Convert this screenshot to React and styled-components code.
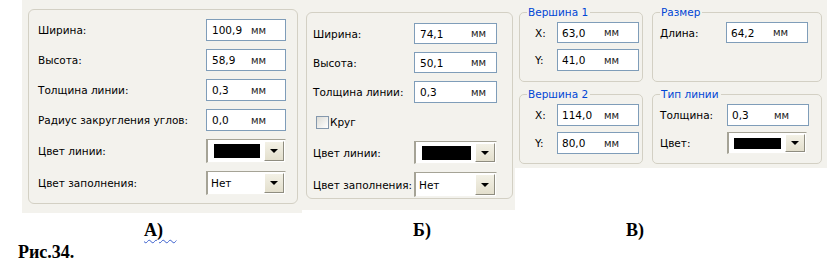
import React from 'react';
import styled, { createGlobalStyle } from 'styled-components';

const Global = createGlobalStyle`
  html, body { margin: 0; padding: 0; background: #ffffff; }
  body { font-family: "DejaVu Sans", Verdana, sans-serif; }
`;

const Page = styled.div`
  width: 831px;
  height: 266px;
  overflow: hidden;
  background: #fff;
`;

const Figures = styled.div`
  display: flex;
  align-items: flex-start;
`;

const Sheet = styled.div`
  box-sizing: border-box;
  width: ${p => p.$w}px;
  height: ${p => p.$h}px;
  margin-left: ${p => p.$ml || 0}px;
  padding: ${p => p.$pad};
  background: #f3f2ed;
`;

const Frame = styled.div`
  box-sizing: border-box;
  height: 100%;
  border: 1px solid #d3d0c4;
  border-radius: 6px;
  padding: ${p => p.$pad};
  display: grid;
  grid-template-columns: ${p => p.$cols};
  row-gap: 8px;
  align-content: start;
  align-items: center;
`;

const Label = styled.span`
  font-size: 10.5px;
  color: #000;
  white-space: nowrap;
`;

const Field = styled.div`
  box-sizing: border-box;
  width: ${p => p.$w}px;
  height: ${p => p.$h || 22}px;
  border: 1px solid #7f9db9;
  background: #fff;
  display: flex;
  align-items: center;
  padding-left: ${p => p.$pl || 5}px;
  font-size: 10.5px;
  color: #000;
`;

const Value = styled.span`
  width: ${p => p.$vw}px;
  flex: none;
`;

const Unit = styled.span`
  color: #222;
  font-size: 10px;
`;

const Combo = styled.div`
  box-sizing: border-box;
  width: ${p => p.$w}px;
  height: ${p => p.$h || 23}px;
  display: flex;
  align-items: stretch;
  border-style: solid;
  border-width: 1px 1px 1px 2px;
  border-color: #a5a396 #f4f3ee #f4f3ee #a5a396;
  background: #fff;
  padding: 1px 1px 1px 0;
`;

const ComboBody = styled.div`
  flex: 1;
  display: flex;
  align-items: center;
  padding: 0 4px 0 ${p => p.$pl || 4}px;
  font-size: 10.5px;
  color: #000;
`;

const Swatch = styled.div`
  flex: 1;
  height: ${p => p.$sh || 13}px;
  background: #000;
`;

const DropButton = styled.div`
  box-sizing: border-box;
  width: 20px;
  flex: none;
  display: flex;
  align-items: center;
  justify-content: center;
  background: linear-gradient(#f3f1e6, #e3dfcd);
  border-style: solid;
  border-width: 1px;
  border-color: #ffffff #8f8d80 #8f8d80 #ffffff;
`;

const Arrow = styled.span`
  width: 0;
  height: 0;
  border-left: 4px solid transparent;
  border-right: 4px solid transparent;
  border-top: 4px solid #000;
`;

const CheckRow = styled.label`
  grid-column: 1 / -1;
  display: flex;
  align-items: center;
  gap: 1px;
  height: 22px;
  padding-left: 3px;
  font-size: 10.5px;
  color: #000;
`;

const CheckBox = styled.span`
  box-sizing: border-box;
  width: 13px;
  height: 13px;
  border: 1px solid #8498ad;
  background: linear-gradient(135deg, #dcdcd6, #ffffff);
`;

const GroupGrid = styled.div`
  display: grid;
  grid-template-columns: 124px 170px;
  column-gap: 9px;
  row-gap: 5px;
`;

const Group = styled.fieldset`
  box-sizing: border-box;
  margin: 0;
  height: 77px;
  border: 1px solid #d3d0c4;
  border-radius: 5px;
  padding: 3px 3px 0 7px;
  min-width: 0;
`;

const Legend = styled.legend`
  padding: 0 2px 0 1px;
  font-size: 10.5px;
  line-height: 14px;
  color: #0046d5;
`;

const GroupBody = styled.div`
  display: grid;
  grid-template-columns: ${p => p.$cols};
  padding-left: ${p => p.$pl || 0}px;
  row-gap: 6px;
  align-items: center;
`;

const Captions = styled.div`
  display: grid;
  grid-template-columns: 269px 213px auto;
  padding: 7px 0 0 144px;
`;

const Caption = styled.span`
  font-family: "Liberation Serif", "Times New Roman", serif;
  font-weight: bold;
  font-size: 18px;
  line-height: 20px;
  color: #000;
`;

const Wavy = styled.span`
  text-decoration: underline wavy #3a5fcd;
  text-decoration-thickness: 1px;
  text-underline-offset: 3px;
`;

const FigureNote = styled.div`
  padding: 2px 0 0 18px;
  font-family: "Liberation Serif", "Times New Roman", serif;
  font-weight: bold;
  font-size: 18px;
  line-height: 20px;
  color: #000;
`;

const Input = ({ w, h, pl, vw, value }) => (
  <Field $w={w} $h={h} $pl={pl}>
    <Value $vw={vw}>{value}</Value>
    <Unit>мм</Unit>
  </Field>
);

const ColorCombo = ({ w, h, sh, pl }) => (
  <Combo $w={w} $h={h}>
    <ComboBody $pl={pl}>
      <Swatch $sh={sh} />
    </ComboBody>
    <DropButton>
      <Arrow />
    </DropButton>
  </Combo>
);

const TextCombo = ({ w, h, text }) => (
  <Combo $w={w} $h={h}>
    <ComboBody $pl={3}>{text}</ComboBody>
    <DropButton>
      <Arrow />
    </DropButton>
  </Combo>
);

export default function App() {
  return (
    <Page>
      <Global />
      <Figures>
        <Sheet $ml={22} $w={280} $h={213} $pad="9px 4px 9px 6px">
          <Frame $pad="9px 0 0 9px" $cols="168px 80px">
            <Label>Ширина:</Label>
            <Input w={80} vw={39} value="100,9" />
            <Label>Высота:</Label>
            <Input w={80} vw={39} value="58,9" />
            <Label>Толщина линии:</Label>
            <Input w={80} vw={39} value="0,3" />
            <Label>Радиус закругления углов:</Label>
            <Input w={80} vw={39} value="0,0" />
            <Label>Цвет линии:</Label>
            <ColorCombo w={80} h={24} sh={14} pl={6} />
            <Label>Цвет заполнения:</Label>
            <TextCombo w={80} h={24} text="Нет" />
          </Frame>
        </Sheet>

        <Sheet $w={213} $h={210} $pad="12px 2px 11px 4px">
          <Frame $pad="10px 0 0 6px" $cols="101px 83px">
            <Label>Ширина:</Label>
            <Input w={83} h={21} vw={51} value="74,1" />
            <Label>Высота:</Label>
            <Input w={83} h={21} vw={51} value="50,1" />
            <Label>Толщина линии:</Label>
            <Input w={83} h={22} vw={51} value="0,3" />
            <CheckRow>
              <CheckBox />
              Круг
            </CheckRow>
            <Label>Цвет линии:</Label>
            <ColorCombo w={83} h={23} sh={14} pl={6} />
            <Label>Цвет заполнения:</Label>
            <TextCombo w={83} h={25} text="Нет" />
          </Frame>
        </Sheet>

        <Sheet $w={312} $h={168} $pad="5px 5px 0 4px">
          <GroupGrid>
            <Group>
              <Legend>Вершина 1</Legend>
              <GroupBody $cols="22px 82px" $pl={8}>
                <Label>X:</Label>
                <Input w={82} h={21} pl={4} vw={42} value="63,0" />
                <Label>Y:</Label>
                <Input w={82} h={22} pl={4} vw={42} value="41,0" />
              </GroupBody>
            </Group>
            <Group>
              <Legend>Размер</Legend>
              <GroupBody $cols="66px 82px">
                <Label>Длина:</Label>
                <Input w={82} h={21} pl={4} vw={42} value="64,2" />
              </GroupBody>
            </Group>
            <Group>
              <Legend>Вершина 2</Legend>
              <GroupBody $cols="22px 82px" $pl={8}>
                <Label>X:</Label>
                <Input w={82} h={22} pl={4} vw={42} value="114,0" />
                <Label>Y:</Label>
                <Input w={82} h={22} pl={4} vw={42} value="80,0" />
              </GroupBody>
            </Group>
            <Group>
              <Legend>Тип линии</Legend>
              <GroupBody $cols="67px 80px">
                <Label>Толщина:</Label>
                <Input w={82} h={22} pl={4} vw={42} value="0,3" />
                <Label>Цвет:</Label>
                <ColorCombo w={80} h={22} sh={11} pl={5} />
              </GroupBody>
            </Group>
          </GroupGrid>
        </Sheet>
      </Figures>

      <Captions>
        <Caption><Wavy>А)&nbsp;&nbsp;&nbsp;</Wavy></Caption>
        <Caption>Б)</Caption>
        <Caption>В)</Caption>
      </Captions>
      <FigureNote>Рис.34.</FigureNote>
    </Page>
  );
}
